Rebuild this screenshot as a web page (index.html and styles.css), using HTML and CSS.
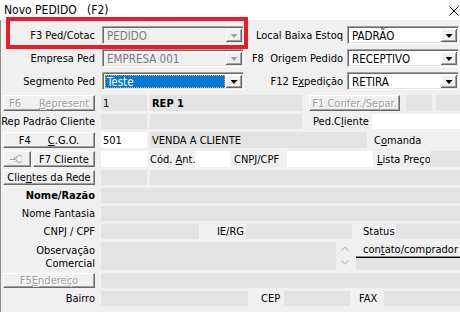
FILE: index.html
```html
<!DOCTYPE html>
<html lang="pt">
<head>
<meta charset="utf-8">
<title>Novo PEDIDO</title>
<link rel="stylesheet" href="styles.css">
</head>
<body>
<div class="title">
  <span class="ttext">Novo PEDIDO   (F2)</span>
  <svg class="close" width="10" height="10" viewBox="0 0 10 10"><path d="M0.5 0.5L9.5 9.5M9.5 0.5L0.5 9.5" stroke="#000" stroke-width="1" fill="none"/></svg>
</div>
<div class="form">
  <div class="top">
    <div class="trow">
      <span class="lbl tl">F3 Ped/Cotac</span>
      <div class="combo lc dis"><span class="val">PEDIDO</span><span class="dd"><i class="arr"></i></span></div>
      <span class="lbl tr">Local Baixa Estoq</span>
      <div class="combo rcb"><span class="val">PADRÃO</span><span class="dd"><i class="arr"></i></span></div>
    </div>
    <div class="trow">
      <span class="lbl tl">Empresa Ped</span>
      <div class="combo lc dis"><span class="val">EMPRESA 001</span><span class="dd"><i class="arr"></i></span></div>
      <span class="lbl tr">F8  Origem Pedido</span>
      <div class="combo rcb"><span class="val">RECEPTIVO</span><span class="dd"><i class="arr"></i></span></div>
    </div>
    <div class="trow">
      <span class="lbl tl">Segmento Ped</span>
      <div class="combo lc"><span class="val sel">Teste</span><span class="dd"><i class="arr"></i></span></div>
      <span class="lbl tr">F12 E<u>x</u>pedição</span>
      <div class="combo rcb"><span class="val">RETIRA</span><span class="dd"><i class="arr"></i></span></div>
    </div>
  </div>

  <div class="rows">
    <div class="row h16">
      <div class="b dis c1"><span>F6</span><span class="sp18"></span><span><u>R</u>epresent</span></div>
      <div class="f ml6 w46">1</div>
      <div class="f ml3 w152 bold">REP 1</div>
      <div class="b dis ml7 w91">F1 Confer./Separ.</div>
      <div class="f ml6 w26"></div>
      <div class="f ml4 grow"></div>
    </div>
    <div class="row">
      <div class="lab r c1">Rep Padrão Cliente</div>
      <div class="f ml6 w46"></div>
      <div class="f ml3 w152"></div>
      <div class="lab ml11 w59">Ped.C<u>l</u>iente</div>
      <div class="f wh grow"></div>
    </div>
    <div class="row h16">
      <div class="b c1"><span>F4</span><span class="sp17"></span><span><u>C</u>.G.O.</span></div>
      <div class="f wh ml6 w46">501</div>
      <div class="f ml3 w217">VENDA A CLIENTE</div>
      <div class="lab ml7">C<u>o</u>manda</div>
    </div>
    <div class="row h16">
      <div class="b dis w28">
        <svg width="14" height="10" viewBox="0 0 14 10"><g fill="none" stroke="#a0a0a0" stroke-width="1"><path d="M0 5.5H4M4.5 3V8"/><path d="M12 2.5A3.6 3.6 0 1 0 12 7.5"/></g><g fill="none" stroke="#fff" stroke-width="1" opacity="0.9"><path d="M1 6.5H5"/></g></svg>
      </div>
      <div class="b ml2 w62">F7 Cliente</div>
      <div class="f wh ml6 w46"></div>
      <div class="lab ml3 w45">Cód. <u>A</u>nt.</div>
      <div class="f wh w35"></div>
      <div class="lab ml4 w53">CNP<u>J</u>/CPF</div>
      <div class="f wh w86"></div>
      <div class="lab ml4 w53"><u>L</u>ista Preço</div>
      <div class="f grow"></div>
    </div>
    <div class="row">
      <div class="b c1">Clie<u>n</u>tes da Rede</div>
      <div class="f ml6 w46"></div>
      <div class="f ml3 grow"></div>
    </div>
    <div class="row">
      <div class="lab r c1 bold">Nome/Razão</div>
      <div class="f ml6 grow"></div>
    </div>
    <div class="row">
      <div class="lab r c1">Nome Fantasia</div>
      <div class="f ml6 grow"></div>
    </div>
    <div class="row">
      <div class="lab r c1">CNPJ / CPF</div>
      <div class="f ml6 w98"></div>
      <div class="lab r w45">IE/RG</div>
      <div class="f ml2 w106"></div>
      <div class="lab ml11 w33">Status</div>
      <div class="f grow"></div>
    </div>
    <div class="row h28">
      <div class="lab r c1 two">Observação<br>Comercial</div>
      <div class="f ml6 w235"></div>
      <div class="sb">
        <svg width="8" height="5" viewBox="0 0 8 5"><path d="M0.5 4.5L4 1L7.5 4.5" fill="none" stroke="#c4c4c4" stroke-width="1.2"/></svg>
        <svg width="8" height="5" viewBox="0 0 8 5"><path d="M0.5 0.5L4 4L7.5 0.5" fill="none" stroke="#c4c4c4" stroke-width="1.2"/></svg>
      </div>
      <div class="rcol">
        <div class="cbtn">con<u>t</u>ato/comprador</div>
        <div class="f grow"></div>
      </div>
    </div>
    <div class="row">
      <div class="b dis c1">F5<u>E</u>ndereço</div>
      <div class="f ml6 grow"></div>
    </div>
    <div class="row">
      <div class="lab r c1">Bairro</div>
      <div class="f ml6 w147"></div>
      <div class="lab ml13 w23">CEP</div>
      <div class="f w66"></div>
      <div class="lab ml9 w25">FAX</div>
      <div class="f grow"></div>
    </div>
  </div>
</div>
<div class="redbox"></div>
</body>
</html>
```
FILE: styles.css
```css
* { box-sizing: border-box; }
html, body { margin: 0; padding: 0; }
body {
  width: 460px;
  height: 312px;
  overflow: hidden;
  position: relative;
  background: #f0f0f0;
  color: #000;
  font-family: "DejaVu Sans Condensed", "DejaVu Sans", sans-serif;
  font-stretch: condensed;
  font-size: 11px;
}
u { text-decoration: underline; text-underline-offset: 1px; }
.bold { font-weight: bold; }

.title {
  height: 20px;
  background: #fff;
  display: flex;
  align-items: center;
  padding-left: 4px;
  font-size: 12px;
}
.ttext { white-space: pre; }
.close { margin-left: auto; margin-right: 1px; margin-top: 2px; }

.form {
  height: 292px;
  padding-left: 3px;
  box-shadow: inset 1px 0 #8c8c8c;
}

.top {
  padding-top: 6px;
  display: flex;
  flex-direction: column;
  gap: 5px;
}
.trow { display: flex; height: 18px; align-items: center; }
.lbl { white-space: pre; }
.tl { width: 92px; text-align: right; }
.tr { width: 99px; text-align: right; }

.combo {
  display: flex;
  height: 18px;
  background: #fff;
  border-top: 1px solid #a0a0a0;
  border-left: 1px solid #a0a0a0;
  border-bottom: 1px solid #fff;
  border-right: 1px solid #fff;
  box-shadow: inset 1px 1px #696969, inset -1px -1px #e3e3e3;
  padding: 2px 1px 1px 2px;
  font-size: 11.5px;
}
.lc { width: 142px; margin-left: 7px; }
.rcb { width: 112px; margin-left: 4px; }
.combo.dis { background: #f0f0f0; color: #7a7a7a; }
.val {
  flex: 1;
  display: flex;
  align-items: center;
  padding-left: 2px;
  white-space: pre;
}
.val.sel {
  background: #0078d7;
  color: #fff;
  border: 1px dotted #f0a040;
  padding-left: 1px;
  margin-right: 1px;
}
.dd {
  width: 16px;
  display: flex;
  align-items: center;
  justify-content: center;
  background: #f0f0f0;
  box-shadow: inset -1px -1px #696969, inset 1px 1px #fff, inset -2px -2px #a0a0a0;
}
.arr {
  display: block;
  width: 7px;
  height: 4px;
  background: #000;
  clip-path: polygon(0 0, 100% 0, 50% 100%);
  margin-top: 1px;
}
.dis .arr { background: #a0a0a0; }

.rows {
  margin-top: 5px;
  display: flex;
  flex-direction: column;
  gap: 3px;
}
.row { display: flex; height: 15px; }
.h16 { height: 16px; }
.h28 { height: 28px; }

.f {
  background: #e3e3e3;
  display: flex;
  align-items: center;
  padding-left: 2px;
  white-space: pre;
}
.f.wh { background: #fff; }
.lab {
  display: flex;
  align-items: center;
  white-space: pre;
}
.lab.r { justify-content: flex-end; }
.two {
  flex-direction: column;
  align-items: flex-end;
  justify-content: center;
  line-height: 13px;
  text-align: right;
}

.b {
  display: flex;
  align-items: center;
  justify-content: center;
  white-space: pre;
  background: #f0f0f0;
  border-top: 1px solid #fff;
  border-left: 1px solid #fff;
  border-right: 1px solid #696969;
  border-bottom: 1px solid #696969;
  box-shadow: inset -1px -1px #a0a0a0;
}
.b.dis { color: #a0a0a0; text-shadow: 1px 1px 0 #fff; }
.sp18 { display: inline-block; width: 18px; }
.sp17 { display: inline-block; width: 17px; }

.sb {
  width: 20px;
  background: #f0f0f0;
  display: flex;
  flex-direction: column;
  justify-content: space-between;
  align-items: center;
  padding: 4px 3px 5px 0;
}
.rcol { flex: 1; display: flex; flex-direction: column; }
.cbtn {
  height: 16px;
  display: flex;
  align-items: center;
  padding-left: 7px;
  white-space: pre;
  background: #f0f0f0;
  border-bottom: 1px solid #000;
  box-shadow: inset 0 -1px #8c8c8c;
}
.rcol .f { flex: 1; }

.grow { flex: 1; }
.c1 { width: 92px; }
.w23 { width: 23px; }
.w25 { width: 25px; }
.w26 { width: 26px; }
.w28 { width: 28px; }
.w33 { width: 33px; }
.w35 { width: 35px; }
.w45 { width: 45px; }
.w46 { width: 46px; }
.w53 { width: 53px; }
.w59 { width: 59px; }
.w62 { width: 62px; }
.w66 { width: 66px; }
.w86 { width: 86px; }
.w91 { width: 91px; }
.w98 { width: 98px; }
.w106 { width: 106px; }
.w147 { width: 147px; }
.w152 { width: 152px; }
.w217 { width: 217px; }
.w235 { width: 235px; }
.ml2 { margin-left: 2px; }
.ml3 { margin-left: 3px; }
.ml4 { margin-left: 4px; }
.ml6 { margin-left: 6px; }
.ml7 { margin-left: 7px; }
.ml9 { margin-left: 9px; }
.ml11 { margin-left: 11px; }
.ml13 { margin-left: 13px; }

.redbox {
  position: absolute;
  left: 6px;
  top: 17px;
  width: 242px;
  height: 32px;
  border: 4px solid #ec1c24;
  pointer-events: none;
}
```
